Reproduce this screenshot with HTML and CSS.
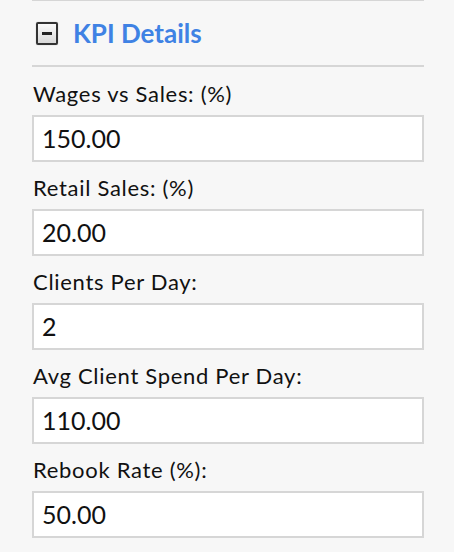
FILE: index.html
```html
<!DOCTYPE html>
<html>
<head>
<meta charset="utf-8">
<link rel="stylesheet" href="styles.css">
</head>
<body>
<div class="panel">
  <div class="section-head">
    <span class="toggle"><span class="minus"></span></span>
    <span class="title">KPI Details</span>
  </div>
  <div class="fields">
    <div class="field">
      <label class="label">Wages vs Sales: (%)</label>
      <div class="input">150.00</div>
    </div>
    <div class="field">
      <label class="label">Retail Sales: (%)</label>
      <div class="input">20.00</div>
    </div>
    <div class="field">
      <label class="label">Clients Per Day:</label>
      <div class="input">2</div>
    </div>
    <div class="field">
      <label class="label">Avg Client Spend Per Day:</label>
      <div class="input">110.00</div>
    </div>
    <div class="field">
      <label class="label">Rebook Rate (%):</label>
      <div class="input">50.00</div>
    </div>
  </div>
</div>
</body>
</html>
```
FILE: styles.css
```css
html, body {
  margin: 0;
  padding: 0;
  background: #f7f7f7;
}
body {
  font-family: Lato, "Open Sans", sans-serif;
  color: #111;
}
.panel {
  margin-left: 32px;
  width: 392px;
  border-top: 1px solid #d6d6d6;
}
.section-head {
  height: 64px;
  display: flex;
  align-items: center;
  border-bottom: 2px solid #d6d6d6;
  padding-left: 4px;
}
.toggle {
  width: 18px;
  height: 19px;
  border: 2px solid #333;
  border-radius: 2px;
  background: linear-gradient(#fafafa, #d8d8d8);
  display: flex;
  align-items: center;
  justify-content: center;
  box-shadow: 0 0 1px rgba(0,0,0,0.4);
}
.minus {
  width: 10px;
  height: 3px;
  background: #222;
}
.title {
  margin-left: 15px;
  font-size: 26px;
  font-weight: 700;
  color: #3f82e4;
}
.fields {
  padding-top: 15px;
  display: flex;
  flex-direction: column;
  gap: 14px;
}
.field {
  display: flex;
  flex-direction: column;
  gap: 9px;
}
.label {
  font-size: 22px;
  line-height: 24px;
  letter-spacing: 0.7px;
  padding-left: 1px;
}
.input {
  height: 43px;
  border: 2px solid #d6d6d6;
  background: #fff;
  font-size: 25px;
  line-height: 43px;
  padding-left: 8px;
}
```
